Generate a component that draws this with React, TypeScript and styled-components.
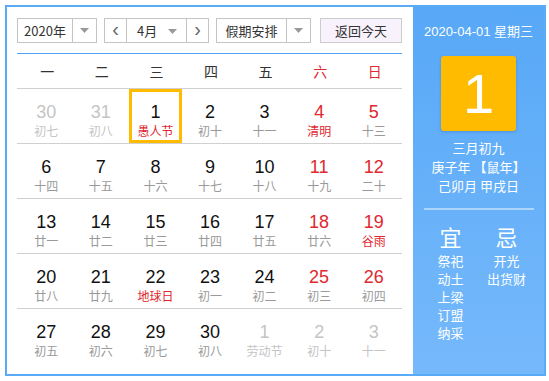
import React from 'react'
import styled, { createGlobalStyle } from 'styled-components'

const GlobalStyle = createGlobalStyle`
body {
  margin: 0;
  background: #fff;
  font-family: "Liberation Sans", "Noto Sans CJK SC", sans-serif;
}
`

type Day = { d: number; l: string; other?: boolean; fest?: boolean; sel?: boolean }

const weeks: Day[][] = [
  [
    { d: 30, l: '初七', other: true },
    { d: 31, l: '初八', other: true },
    { d: 1, l: '愚人节', fest: true, sel: true },
    { d: 2, l: '初十' },
    { d: 3, l: '十一' },
    { d: 4, l: '清明', fest: true },
    { d: 5, l: '十三' },
  ],
  [
    { d: 6, l: '十四' },
    { d: 7, l: '十五' },
    { d: 8, l: '十六' },
    { d: 9, l: '十七' },
    { d: 10, l: '十八' },
    { d: 11, l: '十九' },
    { d: 12, l: '二十' },
  ],
  [
    { d: 13, l: '廿一' },
    { d: 14, l: '廿二' },
    { d: 15, l: '廿三' },
    { d: 16, l: '廿四' },
    { d: 17, l: '廿五' },
    { d: 18, l: '廿六' },
    { d: 19, l: '谷雨', fest: true },
  ],
  [
    { d: 20, l: '廿八' },
    { d: 21, l: '廿九' },
    { d: 22, l: '地球日', fest: true },
    { d: 23, l: '初一' },
    { d: 24, l: '初二' },
    { d: 25, l: '初三' },
    { d: 26, l: '初四' },
  ],
  [
    { d: 27, l: '初五' },
    { d: 28, l: '初六' },
    { d: 29, l: '初七' },
    { d: 30, l: '初八' },
    { d: 1, l: '劳动节', other: true },
    { d: 2, l: '初十', other: true },
    { d: 3, l: '十一', other: true },
  ],
]

const weekNames = ['一', '二', '三', '四', '五', '六', '日']

const App = () => {
  return (
    <>
      <GlobalStyle />
      <Wrapper>
        <Main>
          <Toolbar>
            <Select $w={80}>
              <SelectText>2020年</SelectText>
              <Caret />
            </Select>
            <MonthGroup>
              <ArrowBtn>&lsaquo;</ArrowBtn>
              <MonthText>
                4月
                <TriangleIcon />
              </MonthText>
              <ArrowBtn $right>&rsaquo;</ArrowBtn>
            </MonthGroup>
            <Select $w={95}>
              <SelectText>假期安排</SelectText>
              <Caret />
            </Select>
            <TodayBtn>返回今天</TodayBtn>
          </Toolbar>
          <BlueLine />
          <WeekHeader>
            {weekNames.map((w, i) => (
              <WeekName key={w} $weekend={i >= 5}>{w}</WeekName>
            ))}
          </WeekHeader>
          {weeks.map((week, wi) => (
            <Row key={wi}>
              {week.map((day, di) => (
                <Cell key={di} $sel={day.sel}>
                  <DayNum $other={day.other} $weekend={di >= 5}>{day.d}</DayNum>
                  <Lunar $other={day.other} $fest={day.fest}>{day.l}</Lunar>
                </Cell>
              ))}
            </Row>
          ))}
        </Main>
        <Side>
          <SideDate>2020-04-01 星期三</SideDate>
          <BigDay>1</BigDay>
          <SideInfo>
            <div>三月初九</div>
            <div>庚子年 【鼠年】</div>
            <div>己卯月 甲戌日</div>
          </SideInfo>
          <SideLine />
          <Almanac>
            <AlmanacCol>
              <AlmanacTitle>宜</AlmanacTitle>
              <div>祭祀</div>
              <div>动土</div>
              <div>上梁</div>
              <div>订盟</div>
              <div>纳采</div>
            </AlmanacCol>
            <AlmanacCol>
              <AlmanacTitle>忌</AlmanacTitle>
              <div>开光</div>
              <div>出货财</div>
            </AlmanacCol>
          </Almanac>
        </Side>
      </Wrapper>
    </>
  )
}

export default App

const TriangleIcon = () => (
  <svg width="9" height="5" viewBox="0 0 9 5" style={{ position: 'absolute', right: 9, top: 10 }}>
    <path d="M0 0h9L4.5 5z" fill="#999" />
  </svg>
)

const Caret = () => (
  <CaretBox>
    <svg width="9" height="5" viewBox="0 0 9 5">
      <path d="M0 0h9L4.5 5z" fill="#999" />
    </svg>
  </CaretBox>
)

const Wrapper = styled.div`
margin: 5px;
width: 541px;
height: 371px;
box-sizing: border-box;
border: 2px solid #5aabf7;
display: flex;
`
const Main = styled.div`
width: 406px;
box-sizing: border-box;
padding: 11px 11px 0 10px;
`
const Toolbar = styled.div`
display: flex;
height: 25px;
`
const Select = styled.div<{ $w: number }>`
width: ${p => p.$w}px;
height: 25px;
box-sizing: border-box;
border: 1px solid #c4c4c4;
display: flex;
margin-right: 7px;
font-family: "Noto Sans CJK SC", sans-serif;
font-size: 13px;
color: #333;
`
const SelectText = styled.div`
flex: 1;
display: flex;
align-items: center;
justify-content: center;
border-right: 1px solid #c4c4c4;
`
const CaretBox = styled.div`
width: 23px;
display: flex;
align-items: center;
justify-content: center;
`
const MonthGroup = styled.div`
width: 105px;
height: 25px;
box-sizing: border-box;
border: 1px solid #c4c4c4;
display: flex;
margin-right: 7px;
`
const ArrowBtn = styled.div<{ $right?: boolean }>`
width: 22px;
display: flex;
align-items: center;
justify-content: center;
font-size: 20px;
line-height: 1;
color: #666;
padding-bottom: 3px;
box-sizing: border-box;
${p => (p.$right ? 'border-left: 1px solid #c4c4c4;' : 'border-right: 1px solid #c4c4c4;')}
`
const MonthText = styled.div`
flex: 1;
position: relative;
display: flex;
align-items: center;
padding-left: 10px;
font-family: "Noto Sans CJK SC", sans-serif;
font-size: 13px;
color: #333;
`
const TodayBtn = styled.div`
width: 82px;
height: 25px;
margin-left: 2px;
box-sizing: border-box;
border: 1px solid #cccccc;
background: #f8f2fc;
display: flex;
align-items: center;
justify-content: center;
font-family: "Noto Sans CJK SC", sans-serif;
font-size: 13px;
color: #333;
`
const BlueLine = styled.div`
height: 1px;
margin-top: 10px;
background: #4ea6f5;
`
const WeekHeader = styled.div`
display: grid;
grid-template-columns: repeat(7, 1fr);
height: 34px;
padding-left: 3px;
`
const WeekName = styled.div<{ $weekend?: boolean }>`
display: flex;
align-items: center;
justify-content: center;
font-family: "Noto Sans CJK SC", sans-serif;
font-size: 14px;
color: ${p => (p.$weekend ? '#e0282e' : '#333')};
`
const Row = styled.div`
display: grid;
grid-template-columns: repeat(7, 1fr);
height: 55px;
box-sizing: border-box;
border-top: 1px solid #d0d0d0;
padding-left: 3px;
`
const Cell = styled.div<{ $sel?: boolean }>`
display: flex;
flex-direction: column;
align-items: center;
box-sizing: border-box;
padding-top: 10px;
margin: 0 2px 0 0;
border: 3px solid ${p => (p.$sel ? '#ffbb00' : 'transparent')};
`
const DayNum = styled.div<{ $other?: boolean; $weekend?: boolean }>`
font-family: "Liberation Sans", Arial, sans-serif;
font-size: 18px;
line-height: 20px;
color: ${p => (p.$other ? '#c4c4c4' : p.$weekend ? '#e0282e' : '#111')};
`
const Lunar = styled.div<{ $other?: boolean; $fest?: boolean }>`
font-family: "Noto Sans CJK SC", sans-serif;
font-size: 12px;
line-height: 16px;
margin-top: 1px;
color: ${p => (p.$other ? '#c4c4c4' : p.$fest ? '#e0282e' : '#999')};
`
const Side = styled.div`
flex: 1;
background: linear-gradient(#57a8f7, #76b9fb);
display: flex;
flex-direction: column;
align-items: center;
color: #fff;
font-family: "Noto Sans CJK SC", sans-serif;
font-size: 13px;
`
const SideDate = styled.div`
margin-top: 15px;
font-family: "Liberation Sans", "Noto Sans CJK SC", sans-serif;
line-height: 20px;
`
const BigDay = styled.div`
margin-top: 14px;
width: 75px;
height: 75px;
border-radius: 3px;
background: #ffbb00;
box-shadow: 0 1px 3px rgba(0, 60, 140, 0.25);
display: flex;
align-items: center;
justify-content: center;
font-family: "Liberation Sans", Arial, sans-serif;
font-size: 56px;
color: #fff;
`
const SideInfo = styled.div`
margin-top: 7px;
text-align: center;
line-height: 19px;
`
const SideLine = styled.div`
width: 110px;
height: 2px;
margin-top: 13px;
background: rgba(255, 255, 255, 0.45);
`
const Almanac = styled.div`
display: flex;
gap: 14px;
margin-top: 12px;
`
const AlmanacCol = styled.div`
width: 42px;
display: flex;
flex-direction: column;
align-items: center;
line-height: 18px;
`
const AlmanacTitle = styled.div`
font-size: 22px;
line-height: 28px;
margin-bottom: 2px;
`
